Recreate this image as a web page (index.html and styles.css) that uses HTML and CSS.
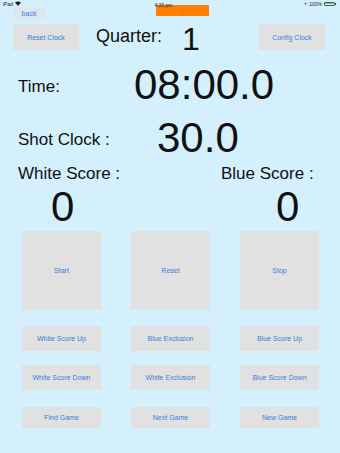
FILE: index.html
```html
<!DOCTYPE html>
<html lang="en">
<head>
  <meta charset="UTF-8">
  <meta name="viewport" content="width=device-width, initial-scale=1.0">
  <title>Water Polo Clock</title>
  <link rel="stylesheet" href="styles.css">
</head>
<body>
  <!-- iPad status bar -->
  <div class="status-bar">
    <div class="status-left">
      iPad
      <svg width="6" height="5" viewBox="0 0 12 10" fill="#222">
        <path d="M6 10L0 3.2C3.4 0 8.6 0 12 3.2Z" />
      </svg>
    </div>
    <div class="status-time">4:36 pm</div>
    <div class="status-right">
      <span class="bt">&#x2733;</span>
      100%
      <span class="battery"><span class="battery-fill"></span></span>
      <span class="battery-tip"></span>
    </div>
  </div>

  <!-- loading tab over the status bar -->
  <div class="loading-tab">
    <svg width="8" height="8" viewBox="0 0 16 16">
      <circle cx="8" cy="8" r="5" fill="none" stroke="#e86f00" stroke-width="2" stroke-dasharray="22 10" />
    </svg>
  </div>

  <div class="back-row">
    <button class="btn btn-back">back</button>
  </div>

  <div class="top-row">
    <button class="btn btn-top">Reset Clock</button>
    <div class="quarter-label">Quarter:</div>
    <div class="quarter-value">1</div>
    <button class="btn btn-top btn-config">Config Clock</button>
  </div>

  <div class="clock-row time-row">
    <div class="clock-label">Time:</div>
    <div class="clock-value">08:00.0</div>
  </div>

  <div class="clock-row shot-row">
    <div class="clock-label">Shot Clock :</div>
    <div class="clock-value">30.0</div>
  </div>

  <div class="scores">
    <div class="team">
      <div class="team-label">White Score :</div>
      <div class="team-score white-score">0</div>
    </div>
    <div class="team">
      <div class="team-label">Blue Score :</div>
      <div class="team-score blue-score">0</div>
    </div>
  </div>

  <div class="big-buttons">
    <button class="btn btn-big">Start</button>
    <button class="btn btn-big">Reset</button>
    <button class="btn btn-big">Stop</button>
  </div>

  <div class="small-buttons">
    <button class="btn btn-small">White Score Up</button>
    <button class="btn btn-small">Blue Exclusion</button>
    <button class="btn btn-small">Blue Score Up</button>
  </div>
  <div class="small-buttons row-2">
    <button class="btn btn-small">White Score Down</button>
    <button class="btn btn-small">White Exclusion</button>
    <button class="btn btn-small">Blue Score Down</button>
  </div>
  <div class="small-buttons row-3">
    <button class="btn btn-small btn-game">Find Game</button>
    <button class="btn btn-small btn-game">Next Game</button>
    <button class="btn btn-small btn-game">New Game</button>
  </div>
</body>
</html>
```

FILE: styles.css
```css
body {
  width: 340px;
  height: 453px;
  margin: 0;
  padding: 0;
  font-family: "Liberation Sans", Arial, sans-serif;
  background: #d4f0fc;
  color: #111111;
  overflow: hidden;
  position: relative;
}

.status-bar {
  display: flex;
  justify-content: space-between;
  align-items: center;
  height: 7px;
  padding: 0 4px 0 3px;
  font-size: 5px;
  color: #222222;
  position: relative;
  z-index: 2;
}

.status-left,
.status-right {
  display: flex;
  align-items: center;
  gap: 2px;
  width: 50px;
}

.status-right {
  justify-content: flex-end;
}

.status-time {
  margin-right: 12px;
  margin-top: 2px;
}

.bt {
  font-size: 4px;
}

.battery {
  display: inline-flex;
  width: 11px;
  height: 4px;
  border: 0.5px solid #555555;
  border-radius: 1px;
  padding: 0.5px;
  box-sizing: border-box;
}

.battery-fill {
  flex: 1;
  background: #4cd964;
}

.battery-tip {
  width: 1px;
  height: 2px;
  margin-left: -2px;
  background: #555555;
}

.loading-tab {
  position: absolute;
  left: 156px;
  top: 5px;
  width: 53px;
  height: 11px;
  background: #ff7f00;
  display: flex;
  align-items: center;
  justify-content: center;
  z-index: 1;
}

.loading-tab svg {
  margin-left: 1px;
  opacity: 0.6;
}

.btn {
  border: none;
  margin: 0;
  padding: 0;
  background: #e1e1e1;
  color: #3a80d6;
  font-family: "Liberation Sans", Arial, sans-serif;
  font-size: 7px;
  cursor: pointer;
  display: flex;
  align-items: center;
  justify-content: center;
}

.back-row {
  padding-left: 13px;
}

.btn-back {
  width: 32px;
  height: 12px;
  background: #dde6ea;
}

.top-row {
  display: flex;
  align-items: flex-start;
  margin-top: 5px;
  height: 26px;
  padding-left: 13px;
}

.btn-top {
  width: 66px;
  height: 26px;
}

.quarter-label {
  font-size: 18px;
  line-height: 18px;
  margin-left: 17px;
  margin-top: 3px;
  width: 86px;
}

.quarter-value {
  font-size: 32px;
  line-height: 32px;
  margin-top: -1px;
  width: 77px;
}

.clock-row {
  display: flex;
  align-items: center;
  padding-left: 18px;
}

.time-row {
  margin-top: 14px;
}

.shot-row {
  margin-top: 11px;
}

.clock-label {
  font-size: 17px;
  line-height: 17px;
  margin-top: 3px;
}

.time-row .clock-label {
  width: 116px;
}

.shot-row .clock-label {
  width: 139px;
}

.clock-value {
  font-size: 42px;
  line-height: 42px;
}

.scores {
  display: grid;
  grid-template-columns: 203px 1fr;
  padding-left: 18px;
  margin-top: 6px;
}

.team-label {
  font-size: 17px;
  line-height: 17px;
}

.team-score {
  font-size: 42px;
  line-height: 42px;
  margin-top: 4px;
}

.white-score {
  margin-left: 33px;
}

.blue-score {
  margin-left: 55px;
}

.big-buttons,
.small-buttons {
  display: grid;
  grid-template-columns: 79px 79px 79px;
  column-gap: 30px;
  padding-left: 22px;
}

.big-buttons {
  margin-top: 3px;
}

.btn-big {
  height: 79px;
}

.small-buttons {
  margin-top: 16px;
}

.small-buttons.row-2 {
  margin-top: 14px;
}

.small-buttons.row-3 {
  margin-top: 17px;
}

.btn-small {
  height: 25px;
}

.btn-game {
  height: 21px;
}
```
